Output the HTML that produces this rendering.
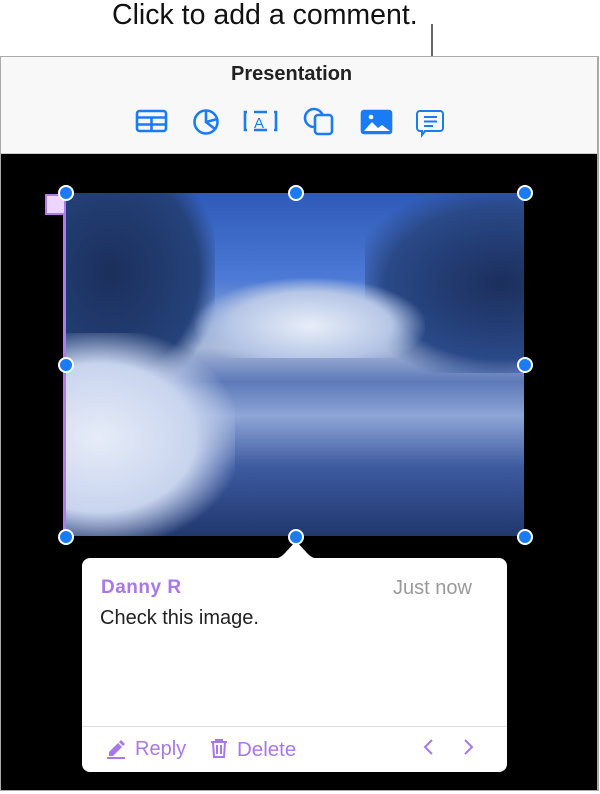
<!DOCTYPE html>
<html><head><style>
body{margin:0;width:600px;height:794px;background:#fff;position:relative;overflow:hidden;font-family:"Liberation Sans",sans-serif}
.a{position:absolute;white-space:nowrap}
.h{position:absolute;width:12px;height:12px;border-radius:50%;background:#1a7cf5;border:2px solid #fff;margin:-8px 0 0 -8px}
</style></head><body>
<div class="a" style="left:112px;top:0;font-size:28.5px;color:#111;line-height:30px">Click to add a comment.</div>
<div class="a" style="left:431px;top:24px;width:2px;height:135px;background:#666"></div>
<div class="a" style="left:0;top:56px;width:596px;height:733px;border:1px solid #aaa;border-right:2px solid #aaa;background:#000"></div>
<div class="a" style="left:1px;top:57px;width:596px;height:96px;background:#f8f8f8;border-bottom:1px solid #ccc"></div>
<div class="a" style="left:231px;top:63px;font-weight:bold;font-size:20px;color:#222">Presentation</div>
<svg class="a" style="left:130px;top:104px" width="330" height="36" fill="none" stroke="#1a7cf5" stroke-width="2.6">
<rect x="7" y="7" width="29" height="20" rx="2.5"/><path d="M7 13.5h29M7 20.5h29M21.5 13.5v13.5"/>
<circle cx="76" cy="18" r="11.5"/><path d="M76 6.5v11.5l9 7M76 18l11.5-3"/>
<path d="M117 8h-2v18h2M144 8h2v18h-2M124 8h13M124 26h13"/><text x="124" y="24" font-size="15" fill="#1a7cf5" stroke="none" font-family="Liberation Sans">A</text>
<circle cx="184" cy="14" r="9"/><rect x="185" y="11" width="17" height="19" rx="3" fill="#f8f8f8"/>
<rect x="232" y="7" width="29" height="22" rx="2" fill="#1a7cf5"/><path d="M234 27l8-9 6 6 4-3 8 6z" fill="#fff" stroke="none"/><circle cx="241" cy="13" r="2.3" fill="#fff" stroke="none"/>
<path d="M290 7h20a3 3 0 0 1 3 3v14a3 3 0 0 1-3 3h-15l-3 4v-4h-2a3 3 0 0 1-3-3v-14a3 3 0 0 1 3-3zM294 13h13M294 17.5h13M294 22h9" stroke-width="2"/>
</svg>
<div class="a" style="left:65px;top:193px;width:459px;height:343px;overflow:hidden;background:linear-gradient(180deg,#2f5ab8 0%,#4d7ad6 25%,#a8b8d8 45%,#5d79b8 55%,#8ea6d6 65%,#3d5aa0 80%,#21386e 100%)">
<div class="a" style="left:0;top:0;width:150px;height:200px;background:radial-gradient(ellipse at 30% 40%,#1b2f5c,#25427a 60%,transparent 75%)"></div>
<div class="a" style="left:300px;top:0;width:170px;height:180px;background:radial-gradient(ellipse at 80% 50%,#1b2f5c,#2a4988 60%,transparent 80%)"></div>
<div class="a" style="left:130px;top:85px;width:230px;height:80px;background:radial-gradient(ellipse at 50% 60%,#e8eef8,#b6c6e6 50%,transparent 72%)"></div>
<div class="a" style="left:0;top:140px;width:170px;height:210px;background:radial-gradient(ellipse at 20% 50%,#e6ecf8,#c8d4ee 50%,transparent 75%)"></div>
</div>
<div class="a" style="left:45px;top:194px;width:17px;height:17px;background:#ecd6ff;border:2px solid #b07ae8"></div>
<div class="a" style="left:63px;top:213px;width:3px;height:323px;background:#b07ae8"></div>
<div class="h" style="left:66px;top:193px"></div><div class="h" style="left:296px;top:193px"></div><div class="h" style="left:525px;top:193px"></div>
<div class="h" style="left:66px;top:365px"></div><div class="h" style="left:525px;top:365px"></div>
<div class="h" style="left:66px;top:537px"></div><div class="h" style="left:525px;top:537px"></div>
<div class="a" style="left:82px;top:558px;width:425px;height:214px;background:#fff;border-radius:8px"></div>
<svg class="a" style="left:272px;top:537px" width="48" height="24"><path d="M0 22q8 0 13-6l11-12 11 12q5 6 13 6z" fill="#fff"/></svg>
<div class="h" style="left:296px;top:537px"></div>
<div class="a" style="left:101px;top:577px;font-size:19px;font-weight:bold;color:#a978e8;letter-spacing:0.5px">Danny R</div>
<div class="a" style="left:393px;top:577px;font-size:20px;color:#9a9a9a">Just now</div>
<div class="a" style="left:100px;top:607px;font-size:20px;color:#222">Check this image.</div>
<div class="a" style="left:82px;top:726px;width:425px;height:1px;background:#ddd"></div>
<svg class="a" style="left:106px;top:738px" width="20" height="22"><path d="M3 14l9-9 4 4-9 9H3z" fill="#a978e8"/><path d="M13 4l2-2 4 4-2 2z" fill="#a978e8"/><rect x="1" y="19" width="18" height="2" fill="#a978e8"/></svg>
<div class="a" style="left:135px;top:738px;font-size:20px;color:#a978e8">Reply</div>
<svg class="a" style="left:209px;top:738px" width="20" height="22" fill="none" stroke="#a978e8" stroke-width="2"><path d="M2 4h16M7 4V2h6v2M4 4l1 15h10l1-15M8 7v9M12 7v9"/></svg>
<div class="a" style="left:237px;top:738px;font-size:20.5px;color:#a978e8">Delete</div>
<svg class="a" style="left:420px;top:738px" width="60" height="20" fill="none" stroke="#a978e8" stroke-width="2"><path d="M12 2l-7 7 7 7M45 2l7 7-7 7"/></svg>
</body></html>
